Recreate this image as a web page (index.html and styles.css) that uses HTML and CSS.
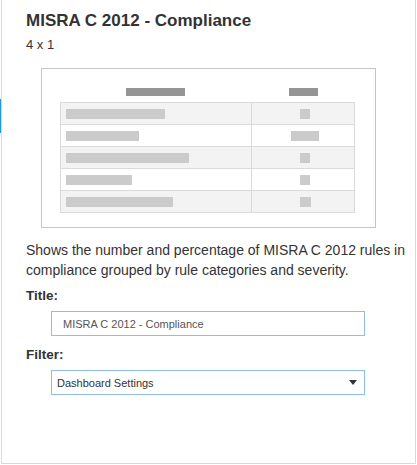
FILE: index.html
```html
<!DOCTYPE html>
<html>
<head>
<meta charset="utf-8">
<link rel="stylesheet" href="styles.css">
</head>
<body>
<div class="marker"></div>
<div class="card">
  <h1 class="title">MISRA C 2012 - Compliance</h1>
  <div class="size">4 x 1</div>
  <div class="preview">
    <div class="phead">
      <div class="hcell1"><span class="hbar hbar1"></span></div>
      <div class="hcell2"><span class="hbar hbar2"></span></div>
    </div>
    <div class="ptable">
      <div class="prow odd"><div class="c1"><span class="bar" style="width:99px"></span></div><div class="c2"><span class="bar" style="width:10px"></span></div></div>
      <div class="prow"><div class="c1"><span class="bar" style="width:73px"></span></div><div class="c2"><span class="bar" style="width:28px"></span></div></div>
      <div class="prow odd"><div class="c1"><span class="bar" style="width:123px"></span></div><div class="c2"><span class="bar" style="width:10px"></span></div></div>
      <div class="prow"><div class="c1"><span class="bar" style="width:66px"></span></div><div class="c2"><span class="bar" style="width:10px"></span></div></div>
      <div class="prow odd last"><div class="c1"><span class="bar" style="width:107px"></span></div><div class="c2"><span class="bar" style="width:11px"></span></div></div>
    </div>
  </div>
  <p class="desc">Shows the number and percentage of MISRA C 2012 rules in compliance grouped by rule categories and severity.</p>
  <label class="label">Title:</label>
  <div class="field input">MISRA C 2012 - Compliance</div>
  <label class="label label2">Filter:</label>
  <div class="field select"><span>Dashboard Settings</span><span class="arrow"></span></div>
</div>
</body>
</html>
```
FILE: styles.css
```css
* { box-sizing: border-box; }
html, body { margin: 0; padding: 0; background: #fff; }
body {
  font-family: "Liberation Sans", Arial, sans-serif;
  color: #333;
  width: 417px;
  height: 465px;
  overflow: hidden;
  position: relative;
}
.marker {
  position: absolute;
  left: 0;
  top: 99px;
  width: 1px;
  height: 34px;
  background: #1a9be0;
}
.card {
  margin-left: 1px;
  width: 415px;
  height: 464px;
  border: 1px solid #d8d8d8;
  border-top: none;
  padding: 11px 8px 0 24px;
  display: flex;
  flex-direction: column;
  align-items: flex-start;
}
.title {
  margin: 0;
  font-size: 17px;
  line-height: 20px;
  font-weight: bold;
  color: #333;
}
.size {
  margin-top: 5px;
  font-size: 13px;
  line-height: 18px;
  color: #333;
}
.preview {
  margin-top: 14px;
  margin-left: 15px;
  width: 335px;
  border: 1px solid #c6c6c6;
  padding: 19px 0 14px 18px;
  display: flex;
  flex-direction: column;
}
.phead {
  display: flex;
  height: 8px;
  margin-bottom: 6px;
}
.hcell1 { width: 191px; display: flex; justify-content: center; }
.hcell2 { width: 102px; display: flex; justify-content: center; padding-left: 3px; }
.hbar { display: block; height: 8px; background: #959595; }
.hbar1 { width: 59px; }
.hbar2 { width: 29px; }
.ptable {
  width: 295px;
  border: 1px solid #dadada;
  display: flex;
  flex-direction: column;
}
.prow {
  display: flex;
  height: 22px;
  border-bottom: 1px solid #dadada;
  background: #fff;
}
.prow.last { height: 21px; border-bottom: none; }
.prow.odd { background: #f3f3f3; }
.c1 {
  width: 191px;
  border-right: 1px solid #dadada;
  padding: 6px 0 0 5px;
}
.c2 {
  width: 102px;
  display: flex;
  justify-content: center;
  padding: 6px 0 0 4px;
}
.bar { display: block; height: 10px; background: #cbcbcb; }
.desc {
  margin: 12px 0 0 0;
  font-size: 14px;
  line-height: 20px;
  color: #333;
}
.label {
  display: block;
  margin-top: 7px;
  font-size: 13.5px;
  line-height: 18px;
  font-weight: bold;
  color: #333;
}
.label2 { margin-top: 10px; }
.field {
  margin-top: 6px;
  margin-left: 25px;
  width: 314px;
  height: 25px;
  border: 1px solid #90bde6;
  font-size: 11px;
  display: flex;
  align-items: center;
}
.input { padding-left: 11px; color: #555; }
.select {
  padding: 0 7px 0 5px;
  color: #333;
  justify-content: space-between;
}
.arrow {
  width: 0;
  height: 0;
  border-left: 4px solid transparent;
  border-right: 4px solid transparent;
  border-top: 5px solid #333;
}
```
